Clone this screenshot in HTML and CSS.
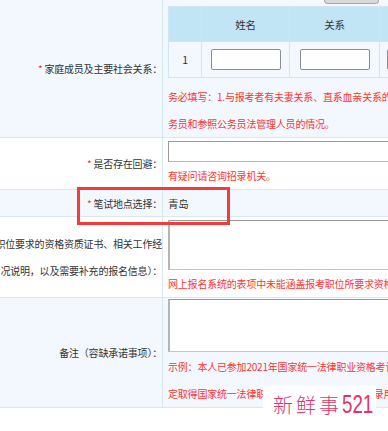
FILE: index.html
```html
<!DOCTYPE html>
<html lang="zh-CN">
<head>
    <meta charset="UTF-8">
    <meta name="viewport" content="width=device-width, initial-scale=1.0">
    <title>报名信息</title>
    <link rel="stylesheet" href="styles.css">
</head>
<body>

<div class="page">
    <div class="form">
        <div class="row light">
            <div class="label"><span class="req">*</span>&nbsp;家庭成员及主要社会关系：</div>
            <div class="field">
                <div class="peek"></div>
                <table class="family">
                    <tr>
                        <th class="c-no"></th>
                        <th class="c-name">姓名</th>
                        <th class="c-rel">关系</th>
                        <th class="c-more">工作单位及职务</th>
                    </tr>
                    <tr>
                        <td>1</td>
                        <td><input type="text" class="cell-input"></td>
                        <td><input type="text" class="cell-input"></td>
                        <td class="c-more"><input type="text" class="cell-input"></td>
                    </tr>
                </table>
                <p class="hint first">务必填写：1.与报考者有夫妻关系、直系血亲关系的人员；2.与报考者有近姻亲关系的人员</p>
                <p class="hint">务员和参照公务员法管理人员的情况。</p>
            </div>
        </div>

        <div class="row">
            <div class="label"><span class="req">*</span>&nbsp;是否存在回避：</div>
            <div class="field">
                <input type="text" class="wide-input">
                <p class="hint">有疑问请咨询招录机关。</p>
            </div>
        </div>

        <div class="row light">
            <div class="label"><span class="req">*</span>&nbsp;笔试地点选择：</div>
            <div class="field plain">青岛</div>
        </div>

        <div class="row">
            <div class="label multi">
                <span>其他信息（请提供报考职位要求的资格资质证书、相关工作经</span>
                <span>历情况说明，以及需要补充的报名信息）：</span>
            </div>
            <div class="field">
                <textarea class="area"></textarea>
                <p class="hint">网上报名系统的表项中未能涵盖报考职位所要求资格条件的，请在此处填写</p>
            </div>
        </div>

        <div class="row light last">
            <div class="label">备注（容缺承诺事项）：</div>
            <div class="field">
                <textarea class="area tall"></textarea>
                <p class="hint">示例：本人已参加2021年国家统一法律职业资格考试，承诺在规定时间内取得</p>
                <p class="hint">定取得国家统一法律职业资格证书，将自愿放弃录用资格。</p>
            </div>
        </div>
    </div>

    <!-- 截图上的标注框和水印 -->
    <div class="mark-box"></div>
    <div class="watermark">新鲜事<span class="num">521</span></div>
</div>

</body>
</html>
```

FILE: styles.css
```css
body {
    margin: 0;
    background: #fff;
    font-family: "Noto Sans CJK SC", "Microsoft YaHei", sans-serif;
    font-size: 10px;
    letter-spacing: -0.2px;
    color: #333;
    overflow: hidden;
}
.page {
    position: relative;
    width: 388px;
    height: 431px;
    overflow: hidden;
}
.row {
    display: grid;
    grid-template-columns: 163px 1fr;
    border-bottom: 1px solid #d6e7f5;
    background: #fff;
}
.row.light {
    background: #f2f8fe;
}
.label {
    display: flex;
    align-items: center;
    justify-content: flex-end;
    padding-right: 0;
    border-right: 1px solid #d6e7f5;
    white-space: nowrap;
    overflow: hidden;
}
.label.multi {
    flex-direction: column;
    align-items: flex-end;
    justify-content: center;
    line-height: 27px;
}
.req {
    color: #f33;
}
.field {
    padding-left: 5px;
    min-width: 0;
    overflow: hidden;
}
.field.plain {
    display: flex;
    align-items: center;
    height: 26px;
    font-size: 10.5px;
}
.hint {
    margin: 0;
    color: #f33;
    line-height: 27px;
    white-space: nowrap;
}
.hint.first {
    margin-top: 5px;
}
.peek {
    width: 55px;
    height: 4px;
    margin-left: 156px;
    margin-bottom: 2px;
    background: #d9d9d9;
    border: 1px solid #a8a8a8;
    border-top: none;
    border-radius: 0 0 5px 5px;
    box-sizing: border-box;
}
.family {
    border-collapse: collapse;
    width: 330px;
}
.family th,
.family td {
    border: 1px solid #cfe4f4;
    text-align: center;
    padding: 0;
}
.family th {
    background: #c2e5f6;
    height: 34px;
    font-weight: normal;
    font-size: 10.5px;
}
.family td {
    height: 35px;
    font-size: 10.5px;
}
.c-no {
    width: 32px;
}
.c-name {
    width: 87px;
}
.c-rel {
    width: 89px;
}
.family td.c-more {
    text-align: left;
    padding-left: 7px;
}
.cell-input {
    width: 70px;
    height: 21px;
    box-sizing: border-box;
    border: 1px solid #8c8c8c;
    border-radius: 2px;
    background: #fff;
    display: block;
    margin: 0 auto;
}
.family td.c-more .cell-input {
    margin: 0;
}
.wide-input {
    display: block;
    width: 300px;
    height: 21px;
    margin-top: 3px;
    box-sizing: border-box;
    border: 1px solid #999;
    border-bottom-color: #bbb;
    background: #fff;
}
.area {
    display: block;
    width: 300px;
    height: 50px;
    margin: 3px 0 0;
    box-sizing: border-box;
    border: 1px solid #c4c4c4;
    border-top-color: #9a9a9a;
    border-left: 2px solid #b5b5b5;
    background: #fff;
    resize: none;
}
.area.tall {
    height: 53px;
    margin: 1px 0 1px;
}
.mark-box {
    position: absolute;
    left: 77px;
    top: 187px;
    width: 153px;
    height: 38px;
    box-sizing: border-box;
    border: 3px solid #f03c3c;
}
.watermark {
    position: absolute;
    left: 263px;
    top: 386px;
    width: 113px;
    height: 36px;
    padding-left: 10px;
    box-sizing: border-box;
    background: #fff;
    color: #e0356b;
    font-size: 20px;
    font-weight: 300;
    letter-spacing: 3px;
    line-height: 36px;
    white-space: nowrap;
}
.watermark .num {
    display: inline-block;
    font-family: "Liberation Sans", sans-serif;
    font-size: 25px;
    letter-spacing: 0;
    transform: scaleX(0.75);
    transform-origin: left center;
}
```
